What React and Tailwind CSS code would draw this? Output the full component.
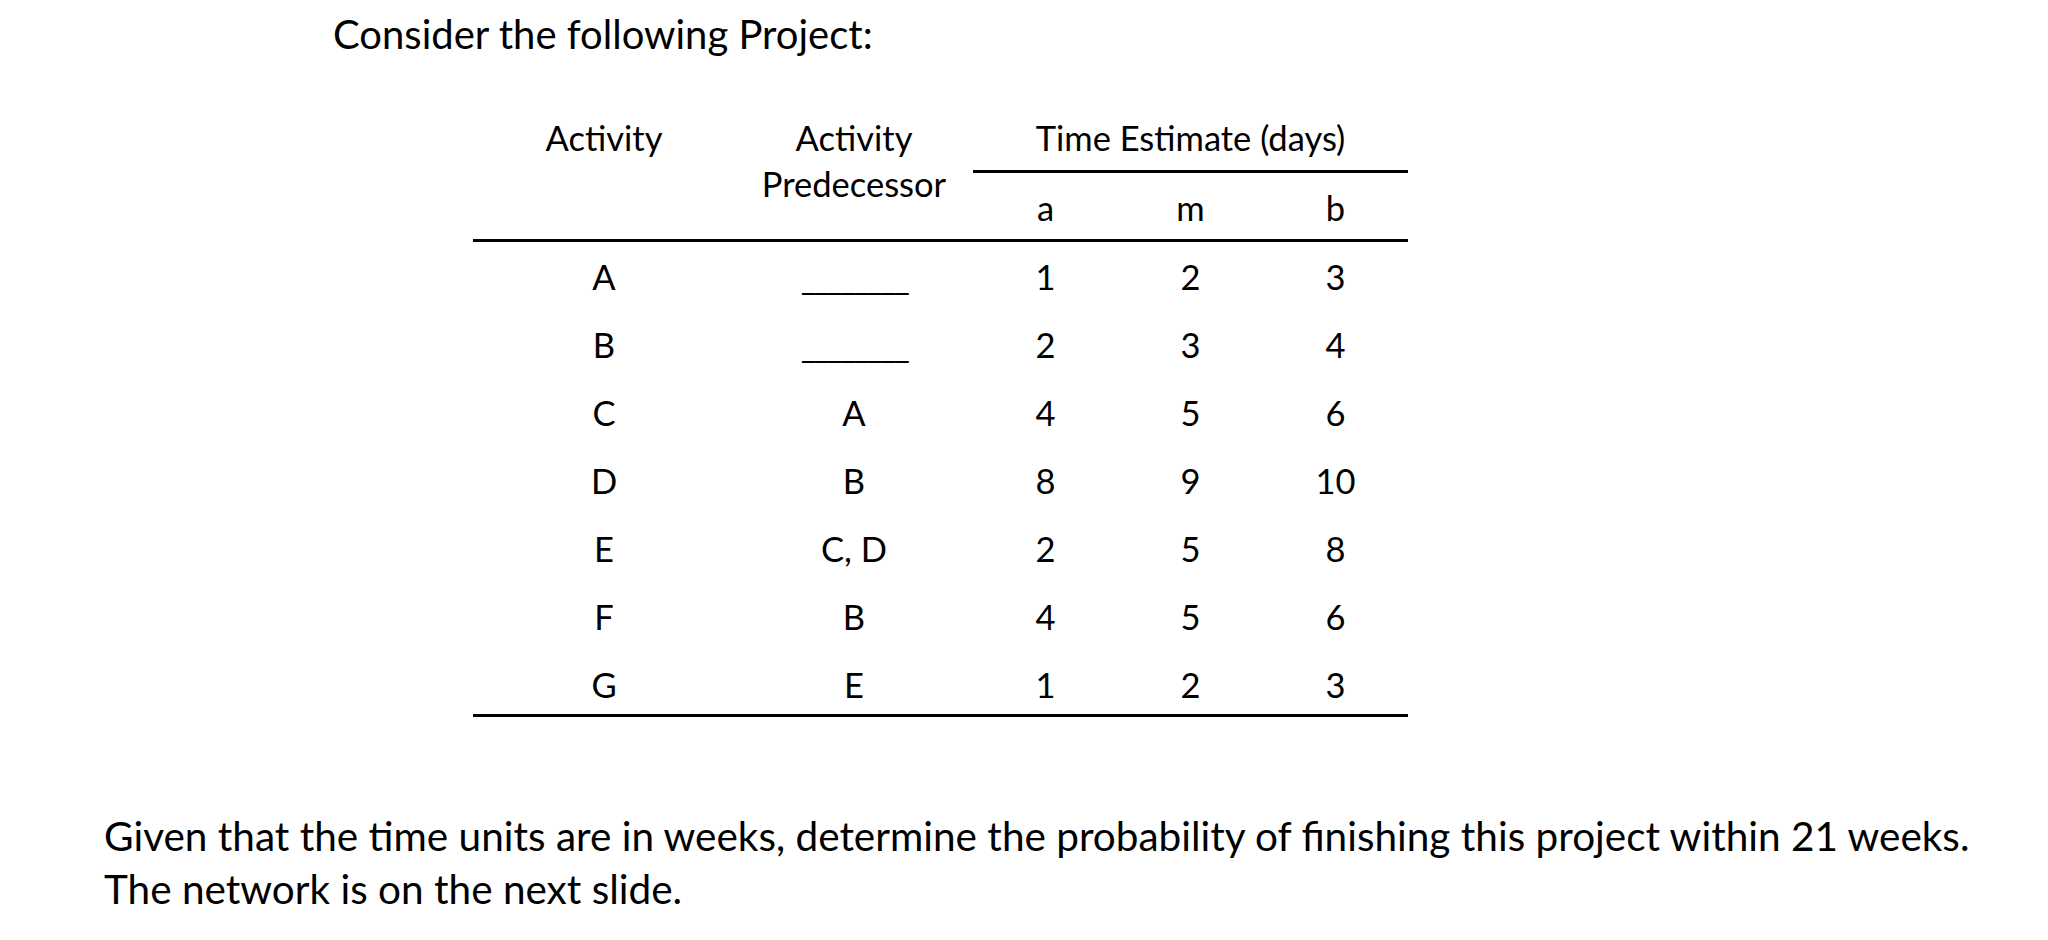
import React from 'react';

const rows = [
  { act: 'A', pred: '________', a: '1', m: '2', b: '3' },
  { act: 'B', pred: '________', a: '2', m: '3', b: '4' },
  { act: 'C', pred: 'A', a: '4', m: '5', b: '6' },
  { act: 'D', pred: 'B', a: '8', m: '9', b: '10' },
  { act: 'E', pred: 'C, D', a: '2', m: '5', b: '8' },
  { act: 'F', pred: 'B', a: '4', m: '5', b: '6' },
  { act: 'G', pred: 'E', a: '1', m: '2', b: '3' },
];

const App = () => {
  return (
    <div className="w-[2048px] h-[940px] bg-white text-black font-['Lato','Liberation_Sans',sans-serif] overflow-hidden">
      {/* Titulo */}
      <div className="pl-[333px] pt-[10px] text-[40px] leading-[48px]">Consider the following Project:</div>

      {/* Tabela */}
      <div className="ml-[473px] mt-[60px] w-[935px] text-[34.5px]">
        <div className="flex items-start h-[121px] leading-[40px]">
          <div className="w-[262px] text-center">Activity</div>
          <div className="w-[238px] text-center leading-[46px] -mt-[3px]">
            <div>Activity</div>
            <div>Predecessor</div>
          </div>
          <div className="w-[435px]">
            <div className="text-center pb-[12px]">Time Estimate (days)</div>
            <div className="border-b-[3px] border-black" />
            <div className="flex mt-[15px]">
              <div className="w-[145px] text-center">a</div>
              <div className="w-[145px] text-center">m</div>
              <div className="w-[145px] text-center">b</div>
            </div>
          </div>
        </div>
        <div className="border-b-[3px] border-black" />
        <div className="pt-[1px]">
          {rows.map((r, i) => (
            <div
              key={r.act}
              className={`flex items-start pt-[14px] leading-[40px] ${i === rows.length - 1 ? 'h-[63px]' : 'h-[68px]'}`}
            >
              <div className="w-[262px] text-center">{r.act}</div>
              <div className={`w-[238px] text-center ${i < 2 ? 'tracking-[-2.5px]' : ''}`}>{r.pred}</div>
              <div className="w-[145px] text-center">{r.a}</div>
              <div className="w-[145px] text-center">{r.m}</div>
              <div className="w-[145px] text-center">{r.b}</div>
            </div>
          ))}
        </div>
        <div className="border-b-[3px] border-black" />
      </div>

      {/* Enunciado */}
      <div className="ml-[104px] mt-[92px] text-[40.5px] leading-[53px]">
        <p>Given that the time units are in weeks, determine the probability of finishing this project within 21 weeks.</p>
        <p>The network is on the next slide.</p>
      </div>
    </div>
  );
};

export default App;
